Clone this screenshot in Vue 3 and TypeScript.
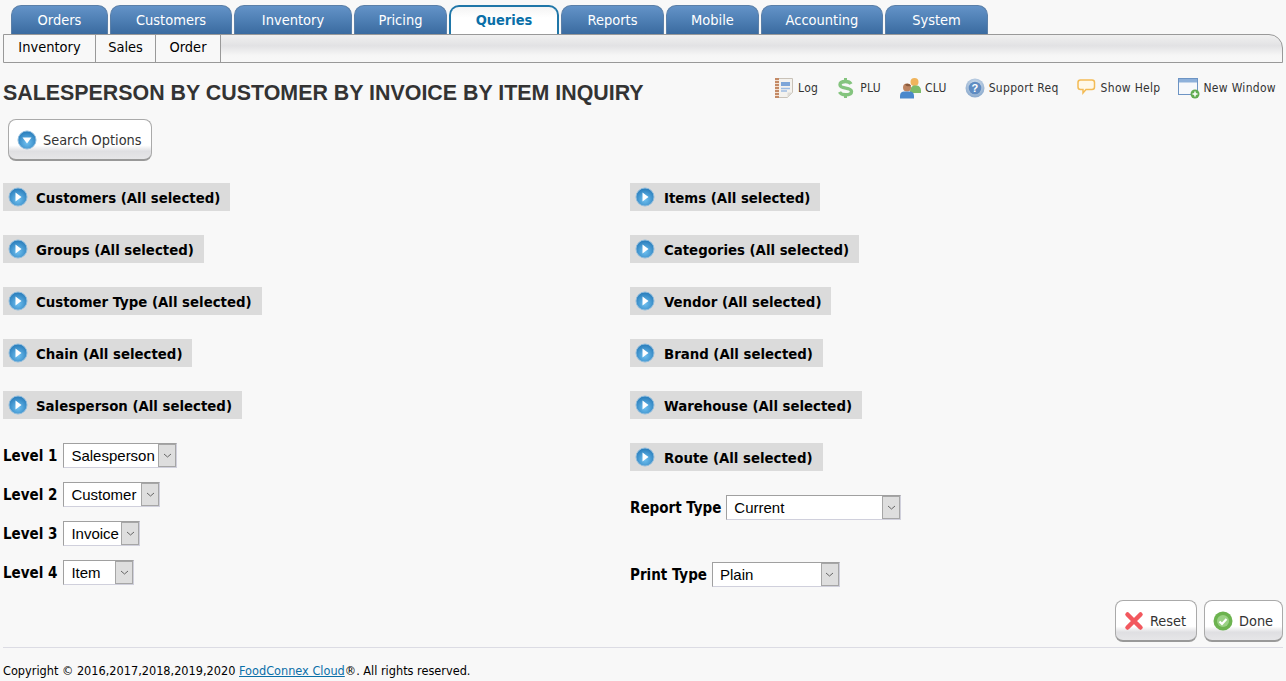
<script setup lang="ts">
const tabs = [
  { name: 'Orders', width: 97 },
  { name: 'Customers', width: 122 },
  { name: 'Inventory', width: 118 },
  { name: 'Pricing', width: 93 },
  { name: 'Queries', width: 110 },
  { name: 'Reports', width: 103 },
  { name: 'Mobile', width: 93 },
  { name: 'Accounting', width: 122 },
  { name: 'System', width: 103 }
]
const subTabs = [
  { name: 'Inventory', width: 92 },
  { name: 'Sales', width: 60 },
  { name: 'Order', width: 65 }
]
const leftFilters = ['Customers', 'Groups', 'Customer Type', 'Chain', 'Salesperson']
const rightFilters = ['Items', 'Categories', 'Vendor', 'Brand', 'Warehouse', 'Route']
const levels = [
  { label: 'Level 1', value: 'Salesperson', width: 114 },
  { label: 'Level 2', value: 'Customer', width: 97 },
  { label: 'Level 3', value: 'Invoice', width: 77 },
  { label: 'Level 4', value: 'Item', width: 71 }
]
</script>

<template>
  <div class="page">
    <nav class="tabs">
      <a
        v-for="t in tabs"
        :key="t.name"
        class="tab"
        :class="{ active: t.name === 'Queries' }"
        :style="{ width: t.width + 'px' }"
      >{{ t.name }}</a>
    </nav>
    <div class="subnav">
      <a v-for="s in subTabs" :key="s.name" class="subtab" :style="{ width: s.width + 'px' }">{{ s.name }}</a>
    </div>

    <header class="head">
      <h1>SALESPERSON BY CUSTOMER BY INVOICE BY ITEM INQUIRY</h1>
      <div class="tools">
        <a class="tool">
          <svg width="21" height="22" viewBox="0 0 21 22">
            <path d="M2.500 1.500h16v14l-5 5h-11z" fill="#f4f2ee" stroke="#c9c2b8" />
            <path d="M13.500 20.500v-5h5z" fill="#dedbd6" />
            <rect x="1" y="1" width="4" height="20" fill="#c48a66" />
            <path d="M1 3.500h4M1 6.500h4M1 9.500h4M1 12.500h4M1 15.500h4M1 18.500h4" stroke="#f1dfd0" />
            <rect x="7" y="5" width="9" height="4" fill="#7ea6d8" />
            <path d="M7 11.500h9M7 14h6" stroke="#9dbce2" stroke-width="1.500" />
          </svg>
          Log
        </a>
        <a class="tool">
          <svg width="21" height="22" viewBox="0 0 21 22">
            <path d="M15 7C14 5.200 12 4.500 9.500 4.500 6.500 4.500 4 5.600 4 7.800 4 12.500 15.500 9.800 15.500 14.500 15.500 16.800 13 17.800 9.500 17.800 6.500 17.800 4.500 16.800 3.500 15" fill="none" stroke="#84c47e" stroke-width="3.400" />
            <path d="M9.500 1v4M9.500 17v4" stroke="#84c47e" stroke-width="3" />
          </svg>
          PLU
        </a>
        <a class="tool">
          <svg width="23" height="22" viewBox="0 0 23 22">
            <circle cx="15.500" cy="5" r="4" fill="#f0b45c" />
            <path d="M11 15c0-4 2-6.500 4.500-6.500h2c2.500 0 4.500 2 4.500 5v2.500H11z" fill="#7dbb69" />
            <circle cx="8" cy="10.500" r="4" fill="#bd8460" />
            <path d="M6 7.500c2-1.500 5-1 6 1.500-2 .5-5 .5-6-1.500z" fill="#8a5a3c" />
            <path d="M1 21.500v-3c0-2.500 2-4 4-4h6c2 0 4 1.500 4 4v3z" fill="#4a88cc" />
          </svg>
          CLU
        </a>
        <a class="tool">
          <svg width="21" height="20" viewBox="0 0 21 20">
            <defs>
              <radialGradient id="sup" cx="50%" cy="35%" r="65%">
                <stop offset="0" stop-color="#dfe8f2" />
                <stop offset="1" stop-color="#88a8cc" />
              </radialGradient>
            </defs>
            <circle cx="10" cy="10" r="9.500" fill="url(#sup)" />
            <circle cx="10" cy="10" r="6.300" fill="#5f8cc2" />
            <text x="10" y="14" text-anchor="middle" class="sup-q">?</text>
          </svg>
          Support Req
        </a>
        <a class="tool">
          <svg width="21" height="20" viewBox="0 0 21 20">
            <path d="M3.500 2h11.500c1.500 0 2.500 1 2.500 2.500v4.500c0 1.500-1 2.500-2.500 2.500h-6l-3 3.500v-3.500H3.500C2 11.500 1 10.500 1 9V4.500C1 3 2 2 3.500 2z" fill="#fff8e8" stroke="#f3bb55" stroke-width="1.500" />
          </svg>
          Show Help
        </a>
        <a class="tool">
          <svg width="22" height="22" viewBox="0 0 22 22">
            <rect x="0.500" y="1.500" width="19" height="16" fill="#f6f8fb" stroke="#6d94c4" />
            <rect x="1" y="2" width="18" height="3.500" fill="#8db0da" />
            <circle cx="17" cy="17" r="4.500" fill="#62ac52" />
            <path d="M14.500 17h5M17 14.500v5" stroke="#fff" stroke-width="1.500" />
          </svg>
          New Window
        </a>
      </div>
    </header>

    <button class="btn search-btn">
      <svg width="20" height="20" viewBox="0 0 20 20">
        <circle cx="10" cy="10" r="9" fill="url(#ball)" stroke="#8fbcdd" />
        <path d="M5.500 7.500h9L10 13.500z" fill="#fff" />
      </svg>
      Search Options
    </button>

    <svg width="0" height="0" class="defs">
      <defs>
        <radialGradient id="ball" cx="50%" cy="65%" r="70%">
          <stop offset="0" stop-color="#6fc0f0" />
          <stop offset="1" stop-color="#2074b4" />
        </radialGradient>
      </defs>
    </svg>

    <div class="columns">
      <section class="col">
        <div v-for="f in leftFilters" :key="f" class="filter">
          <svg width="20" height="20" viewBox="0 0 20 20">
            <circle cx="10" cy="10" r="9" fill="url(#ball)" stroke="#8fbcdd" />
            <path d="M7.500 5.500v9L13.500 10z" fill="#fff" />
          </svg>
          {{ f }} (All selected)
        </div>
        <div class="levels">
          <label v-for="l in levels" :key="l.label" class="field">
            {{ l.label }}
            <span class="select" :style="{ width: l.width + 'px' }">
              <span class="select-val">{{ l.value }}</span>
              <span class="select-arrow"><svg width="9" height="5" viewBox="0 0 9 5"><path d="M1 1l3.500 3L8 1" fill="none" stroke="#666" /></svg></span>
            </span>
          </label>
        </div>
      </section>

      <section class="col right">
        <div v-for="f in rightFilters" :key="f" class="filter">
          <svg width="20" height="20" viewBox="0 0 20 20">
            <circle cx="10" cy="10" r="9" fill="url(#ball)" stroke="#8fbcdd" />
            <path d="M7.500 5.500v9L13.500 10z" fill="#fff" />
          </svg>
          {{ f }} (All selected)
        </div>
        <label class="field">
          Report Type
          <span class="select report-select">
            <span class="select-val">Current</span>
            <span class="select-arrow"><svg width="9" height="5" viewBox="0 0 9 5"><path d="M1 1l3.500 3L8 1" fill="none" stroke="#666" /></svg></span>
          </span>
        </label>
        <label class="field print-type">
          Print Type
          <span class="select print-select">
            <span class="select-val">Plain</span>
            <span class="select-arrow"><svg width="9" height="5" viewBox="0 0 9 5"><path d="M1 1l3.500 3L8 1" fill="none" stroke="#666" /></svg></span>
          </span>
        </label>
      </section>
    </div>

    <div class="actions">
      <button class="btn reset-btn">
        <svg width="20" height="20" viewBox="0 0 20 20">
          <path d="M3.500 3.500l13 13M16.500 3.500l-13 13" stroke="#f2585e" stroke-width="4.500" stroke-linecap="round" />
        </svg>
        Reset
      </button>
      <button class="btn done-btn">
        <svg width="20" height="20" viewBox="0 0 20 20">
          <circle cx="10" cy="10" r="9.500" fill="#6cb34f" />
          <circle cx="10" cy="10" r="6" fill="#9ad184" />
          <path d="M6.500 10.500l2.500 2.500 4.500-5" fill="none" stroke="#fff" stroke-width="2.200" />
        </svg>
        Done
      </button>
    </div>

    <footer class="foot">
      Copyright © 2016,2017,2018,2019,2020 <a>FoodConnex Cloud</a>®. All rights reserved.
    </footer>
  </div>
</template>

<style>
html, body {
  background: #f8f8f8;
}
</style>

<style scoped>
.page {
  padding: 5px 3px 0;
  height: 676px;
  overflow: hidden;
  font-family: "DejaVu Sans Condensed", "DejaVu Sans", sans-serif;
  color: #000;
}

.defs {
  position: absolute;
}

/* Tabs */
.tabs {
  display: flex;
  gap: 2px;
  padding-left: 8px;
  height: 29px;
}

.tab {
  box-sizing: border-box;
  padding-top: 6px;
  border-radius: 10px 10px 0 0;
  border: 1px solid #5a7fa8;
  border-bottom: 0;
  background: linear-gradient(#6393c8, #3a6ba0);
  color: #fff;
  font-size: 14.5px;
  line-height: 17px;
  text-align: center;
}

.tab.active {
  background: linear-gradient(#f4f4f4, #fff 40%);
  border: 2px solid #1f76a8;
  border-bottom: 0;
  color: #0a6fa8;
  font-weight: bold;
  padding-top: 5px;
}

.subnav {
  display: flex;
  height: 27px;
  border: 1px solid #999;
  border-radius: 0 14px 0 0;
  background: linear-gradient(#f0f0f0, #e2e2e4 40%, #f6f6f6 75%, #f8f8f8);
}

.subtab {
  box-sizing: border-box;
  border-right: 1px solid #999;
  background: #f8f8f8;
  font-size: 14.5px;
  line-height: 25px;
  text-align: center;
}

/* Title row */
.head {
  display: flex;
  justify-content: space-between;
  align-items: flex-start;
  height: 56px;
}

h1 {
  margin: 18px 0 0;
  font: bold 21.4px/24px "Liberation Sans", Arial, sans-serif;
  color: #333;
}

.tools {
  display: flex;
  gap: 18px;
  padding: 13px 7px 0 0;
  font-size: 12px;
  letter-spacing: 0.3px;
  color: #333;
}

.tool {
  display: flex;
  align-items: center;
  gap: 3px;
  height: 24px;
}

.sup-q {
  font: bold 11px "Liberation Sans", sans-serif;
  fill: #fff;
}

/* Buttons */
.btn {
  display: inline-flex;
  align-items: center;
  gap: 6px;
  height: 42px;
  border: 1px solid #aaa;
  border-bottom: 2px solid #999;
  border-radius: 8px;
  background: linear-gradient(#fff, #fff 65%, #dfdfe2 80%, #e6e6e8);
  font-family: inherit;
  font-size: 14.4px;
  color: #333;
  cursor: pointer;
}

.search-btn {
  display: flex;
  width: 144px;
  margin-left: 5px;
  padding: 1px 8px 0;
}

/* Filter columns */
.columns {
  display: grid;
  grid-template-columns: 627px 1fr;
  margin-top: 22px;
}

.col {
  display: flex;
  flex-direction: column;
  align-items: flex-start;
}

.filter {
  display: flex;
  align-items: center;
  gap: 8px;
  height: 28px;
  margin-bottom: 24px;
  padding: 0 10px 0 5px;
  background: #dbdbdb;
  font-size: 14.8px;
  font-weight: bold;
}

.right .filter {
  gap: 9px;
}

.levels {
  display: flex;
  flex-direction: column;
  gap: 14px;
}

.levels .field {
  gap: 6px;
}

.field {
  display: flex;
  align-items: center;
  gap: 5px;
  height: 25px;
  font-size: 15px;
  font-weight: bold;
}

.select {
  display: flex;
  height: 25px;
  border: 1px solid #a0a0a0;
  border-right-color: #d0d0dc;
  border-bottom-color: #d0d0dc;
  background: #fff;
  box-sizing: border-box;
  font: 15px/23px "Liberation Sans", Arial, sans-serif;
}

.report-select {
  width: 175px;
}

.print-select {
  width: 128px;
}

.select-val {
  flex: 1;
  padding-left: 7px;
}

.select-arrow {
  display: flex;
  align-items: center;
  justify-content: center;
  width: 16px;
  border: 1px solid #a6a6a6;
  background: #dedede;
}

.print-type {
  margin-top: 42px;
}

/* Bottom */
.actions {
  display: flex;
  justify-content: flex-end;
  gap: 7px;
  margin-top: 13px;
}

.reset-btn {
  width: 82px;
  padding: 1px 8px 0;
}

.done-btn {
  width: 79px;
  padding: 1px 8px 0;
}

.foot {
  margin-top: 5px;
  padding-top: 15px;
  border-top: 1px solid #dcdce4;
  font-size: 12.6px;
  line-height: 16px;
}

.foot a {
  color: #0a6fa8;
  text-decoration: underline;
}
</style>
